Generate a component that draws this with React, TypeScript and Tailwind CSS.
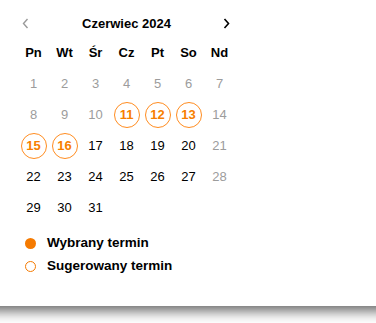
import React from "react";

type Day = { n: number; kind: "past" | "normal" | "sug" | "weekend" };

const rows: Day[][] = [
  [1, 2, 3, 4, 5, 6, 7].map((n) => ({ n, kind: "past" as const })),
  [
    { n: 8, kind: "past" },
    { n: 9, kind: "past" },
    { n: 10, kind: "past" },
    { n: 11, kind: "sug" },
    { n: 12, kind: "sug" },
    { n: 13, kind: "sug" },
    { n: 14, kind: "weekend" },
  ],
  [
    { n: 15, kind: "sug" },
    { n: 16, kind: "sug" },
    { n: 17, kind: "normal" },
    { n: 18, kind: "normal" },
    { n: 19, kind: "normal" },
    { n: 20, kind: "normal" },
    { n: 21, kind: "weekend" },
  ],
  [
    { n: 22, kind: "normal" },
    { n: 23, kind: "normal" },
    { n: 24, kind: "normal" },
    { n: 25, kind: "normal" },
    { n: 26, kind: "normal" },
    { n: 27, kind: "normal" },
    { n: 28, kind: "weekend" },
  ],
  [
    { n: 29, kind: "normal" },
    { n: 30, kind: "normal" },
    { n: 31, kind: "normal" },
  ],
];

const weekdays = ["Pn", "Wt", "Śr", "Cz", "Pt", "So", "Nd"];

function Cell({ d }: { d: Day }) {
  if (d.kind === "sug") {
    return (
      <div className="flex h-[31px] w-[31px] items-center justify-center">
        <div className="flex h-[26px] w-[26px] items-center justify-center rounded-full border-[1.5px] border-[#ff8c1f] text-[13px] font-bold text-[#f77f00]">
          {d.n}
        </div>
      </div>
    );
  }
  const color = d.kind === "normal" ? "text-black" : "text-[#9c9c9c]";
  return (
    <div className={`flex h-[31px] w-[31px] items-center justify-center text-[13px] ${color}`}>
      {d.n}
    </div>
  );
}

export default function App() {
  return (
    <div className="h-[323px] w-[376px] overflow-hidden bg-white" style={{ fontFamily: '"Liberation Sans", Arial, sans-serif' }}>
      <div className="mx-[-20px] h-[306px] bg-white px-[20px] shadow-[0_5px_12px_rgba(0,0,0,0.6)]">
        <div className="w-[235px] pl-[18px] pt-[10px]">
          <div className="flex h-[27px] items-center justify-between">
            <div className="flex w-[16px] justify-center">
              <svg width="7" height="11" viewBox="0 0 7 11" className="mr-[1px]">
                <path d="M5.5 1 L1.5 5.5 L5.5 10" fill="none" stroke="#9a9a9a" strokeWidth="1.4" />
              </svg>
            </div>
            <div className="text-[13px] font-bold text-black">Czerwiec 2024</div>
            <div className="flex w-[16px] justify-center">
              <svg width="7" height="11" viewBox="0 0 7 11" className="mr-[2px]">
                <path d="M1.5 1 L5.5 5.5 L1.5 10" fill="none" stroke="#000" strokeWidth="1.6" />
              </svg>
            </div>
          </div>
          <div className="grid grid-cols-[repeat(7,31px)]">
            {weekdays.map((w) => (
              <div key={w} className="flex h-[31px] items-center justify-center text-[13px] font-bold text-black">
                {w}
              </div>
            ))}
          </div>
          {rows.map((r, i) => (
            <div key={i} className="grid grid-cols-[repeat(7,31px)]">
              {r.map((d) => (
                <Cell key={d.n} d={d} />
              ))}
            </div>
          ))}
        </div>
        <div className="mt-[9px] pl-[25px]">
          <div className="flex h-[23px] items-center gap-[11px]">
            <div className="h-[11px] w-[11px] rounded-full bg-[#f57a00]" />
            <span className="text-[13.5px] font-bold text-black">Wybrany termin</span>
          </div>
          <div className="flex h-[23px] items-center gap-[11px]">
            <div className="h-[11px] w-[11px] rounded-full border-[1.5px] border-[#f57a00]" />
            <span className="text-[13.5px] font-bold text-black">Sugerowany termin</span>
          </div>
        </div>
      </div>
    </div>
  );
}
